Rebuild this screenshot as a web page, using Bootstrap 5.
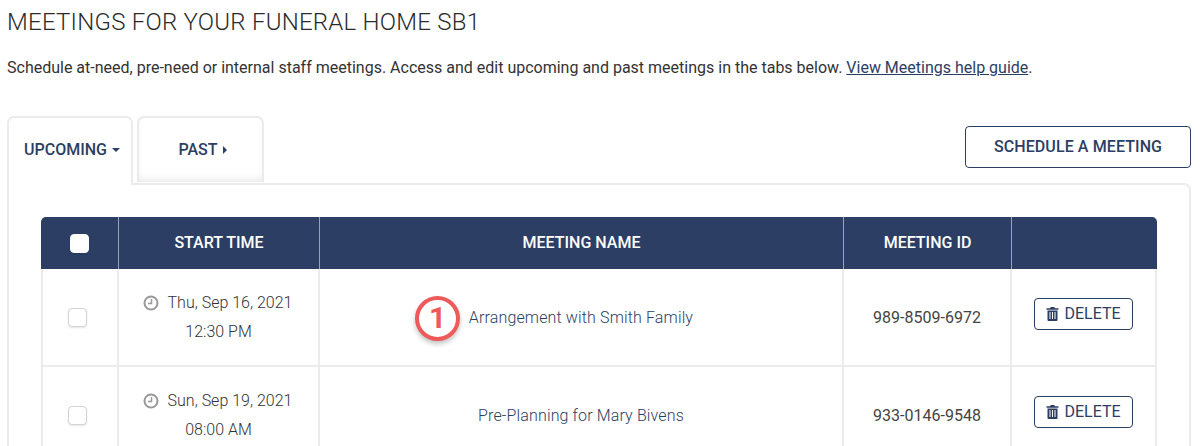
<!DOCTYPE html>
<html lang="en">
<head>
    <meta charset="UTF-8">
    <meta name="viewport" content="width=device-width, initial-scale=1">
    <title>Meetings</title>
    <link href="https://cdn.jsdelivr.net/npm/bootstrap@5.3.0/dist/css/bootstrap.min.css" rel="stylesheet">
    <style>
        html, body { height: 446px; overflow: hidden; }
        body {
            font-family: Roboto, "Liberation Sans", sans-serif;
            color: #333;
            background: #fff;
            padding: 9px 9px 0 7px;
        }
        .page-title {
            font-size: 24px;
            font-weight: 300;
            line-height: 26px;
            margin: 0 0 22px;
            color: #2b2b2b;
            letter-spacing: .24px;
        }
        .page-intro {
            font-size: 16px;
            line-height: 22px;
            margin: 0 0 37px;
            font-weight: 400;
            color: #333;
        }
        .page-intro a { color: #2c3e63; }
        .tab-row { height: 67px; }
        .meeting-tabs { border: 0; gap: 4px; margin: 0; position: relative; z-index: 1; }
        .meeting-tabs .nav-link,
        .meeting-tabs .nav-link.active {
            width: 126px;
            height: 67px;
            padding: 0 0 0 4px;
            display: flex;
            align-items: center;
            justify-content: center;
            gap: 5px;
            font-size: 16px;
            font-weight: 500;
            color: #2c3e63;
            background: #fff;
            border: 2px solid #ebebeb;
            border-bottom: 0;
            border-radius: 7px 7px 0 0;
        }
        .meeting-tabs .nav-link.idle { box-shadow: inset 0 -5px 9px -4px #00000020; width: 127px; height: 66px; }
        .meeting-tabs .nav-link.active { height: 69px; margin-bottom: -2px; padding-bottom: 4px; }
        .tab-caret-down { border: 4px solid transparent; border-top: 4px solid #2c3e63; border-bottom: 0; }
        .tab-caret-right { border: 4px solid transparent; border-left: 4px solid #2c3e63; border-right: 0; }
        .btn-schedule {
            width: 226px;
            height: 42px;
            margin-top: 10px;
            font-size: 16px;
            font-weight: 500;
            color: #2c3e63;
            border: 1.5px solid #2c3e63;
            border-radius: 4px;
            padding: 0;
            letter-spacing: .1px;
        }
        .meetings-panel {
            border: 2px solid #ebebeb;
            border-radius: 0 7px 0 0;
            padding: 32px 32px 0;
            height: 300px;
            overflow: hidden;
        }
        .meetings-table { width: 1116px; margin: 0; table-layout: fixed; border-collapse: separate; border-spacing: 0; }
        .meetings-table th {
            background: #2c3e63;
            color: #fff;
            height: 52px;
            padding: 0;
            font-size: 16px;
            font-weight: 500;
            text-align: center;
            vertical-align: middle;
            border-right: 1px solid #9aa3b5;
        }
        .meetings-table th:first-child { border-radius: 5px 0 0 0; }
        .meetings-table th:last-child { border-radius: 0 5px 0 0; border-right: 0; }
        .meetings-table td {
            height: 98px;
            padding: 0;
            font-size: 16px;
            font-weight: 300;
            line-height: 29px;
            color: #333;
            text-align: center;
            vertical-align: middle;
            border-bottom: 2px solid #ebebeb;
            border-right: 2px solid #ebebeb;
        }
        .meetings-table td:first-child { border-left: 2px solid #ebebeb; }
        .meetings-table td:first-child .pick-box { margin-left: 25px; }
        .meetings-table td.meeting-id { font-weight: 400; color: #444; }
        .meetings-table a { color: #2c3e63; text-decoration: none; letter-spacing: .14px; }
        .pick-box {
            display: block;
            width: 19px;
            height: 19px;
            margin: 0 auto;
            border: 1.5px solid #d4d4d4;
            border-radius: 4px;
            background: #fff;
            box-shadow: 0 1px 2px #0000001a;
        }
        th .pick-box { border-color: #fff; }
        .time-line { display: flex; align-items: center; justify-content: center; gap: 9px; }
        .clock-icon { width: 16px; height: 16px; margin-left: -2px; }
        .name-cell { position: relative; }
        .step-badge {
            position: absolute;
            left: 95px;
            top: 27px;
            width: 45px;
            height: 45px;
            border: 4px solid #ee5a5a;
            border-radius: 50%;
            background: #fff;
            color: #ee5a5a;
            font-size: 30px;
            font-weight: 700;
            line-height: 36px;
            box-shadow: 0 3px 5px #0000003d;
        }
        .btn-delete {
            width: 99px;
            height: 32px;
            padding: 0;
            margin-bottom: 6px;
            display: inline-flex;
            align-items: center;
            justify-content: center;
            gap: 5px;
            font-size: 16px;
            font-weight: 400;
            color: #2c3e63;
            border: 1.5px solid #2c3e63;
            border-radius: 4px;
        }
        .trash-icon { width: 13px; height: 14px; fill: #2c3e63; }
    </style>
</head>
<body>
    <h1 class="page-title">MEETINGS FOR YOUR FUNERAL HOME SB1</h1>
    <p class="page-intro">Schedule at-need, pre-need or internal staff meetings. Access and edit upcoming and past meetings in the tabs below. <a href="#">View Meetings help guide</a>.</p>

    <div class="tab-row d-flex justify-content-between align-items-start">
        <ul class="nav nav-tabs meeting-tabs">
            <li class="nav-item"><a class="nav-link active" href="#">UPCOMING <span class="tab-caret-down"></span></a></li>
            <li class="nav-item"><a class="nav-link idle" href="#">PAST <span class="tab-caret-right"></span></a></li>
        </ul>
        <button class="btn btn-schedule" type="button">SCHEDULE A MEETING</button>
    </div>

    <div class="meetings-panel">
        <table class="meetings-table">
            <colgroup>
                <col style="width: 78px">
                <col style="width: 201px">
                <col style="width: 524px">
                <col style="width: 168px">
                <col style="width: 145px">
            </colgroup>
            <thead>
                <tr>
                    <th><span class="pick-box"></span></th>
                    <th>START TIME</th>
                    <th>MEETING NAME</th>
                    <th>MEETING ID</th>
                    <th></th>
                </tr>
            </thead>
            <tbody>
                <tr>
                    <td><span class="pick-box"></span></td>
                    <td>
                        <span class="time-line">
                            <svg class="clock-icon" viewBox="0 0 16 16" fill="none" stroke="#999" stroke-width="2"><circle cx="8" cy="8" r="6.5"/><path d="M8.5 4v4.5H5" stroke-width="1.5"/></svg>
                            Thu, Sep 16, 2021
                        </span>12:30 PM
                    </td>
                    <td class="name-cell">
                        <span class="step-badge">1</span>
                        <a href="#">Arrangement with Smith Family</a>
                    </td>
                    <td class="meeting-id">989-8509-6972</td>
                    <td>
                        <button class="btn btn-delete" type="button">
                            <svg class="trash-icon" viewBox="0 0 13 14"><path fill-rule="evenodd" d="M4 1.2 4.8 0h3.4L9 1.2h3.5v1.5H.5V1.200zM1.500 3.500h10V13a1 1 0 0 1-1 1h-8a1 1 0 0 1-1-1zM3.500 5v7h1V5zm2.500 0v7h1V5zm2.500 0v7h1V5z"/></svg>
                            DELETE
                        </button>
                    </td>
                </tr>
                <tr>
                    <td><span class="pick-box"></span></td>
                    <td>
                        <span class="time-line">
                            <svg class="clock-icon" viewBox="0 0 16 16" fill="none" stroke="#999" stroke-width="2"><circle cx="8" cy="8" r="6.5"/><path d="M8.5 4v4.5H5" stroke-width="1.5"/></svg>
                            Sun, Sep 19, 2021
                        </span>08:00 AM
                    </td>
                    <td><a href="#">Pre-Planning for Mary Bivens</a></td>
                    <td class="meeting-id">933-0146-9548</td>
                    <td>
                        <button class="btn btn-delete" type="button">
                            <svg class="trash-icon" viewBox="0 0 13 14"><path fill-rule="evenodd" d="M4 1.2 4.8 0h3.4L9 1.2h3.5v1.5H.5V1.200zM1.500 3.500h10V13a1 1 0 0 1-1 1h-8a1 1 0 0 1-1-1zM3.500 5v7h1V5zm2.500 0v7h1V5zm2.500 0v7h1V5z"/></svg>
                            DELETE
                        </button>
                    </td>
                </tr>
            </tbody>
        </table>
    </div>

    <script src="https://cdn.jsdelivr.net/npm/bootstrap@5.3.0/dist/js/bootstrap.bundle.min.js"></script>
</body>
</html>
